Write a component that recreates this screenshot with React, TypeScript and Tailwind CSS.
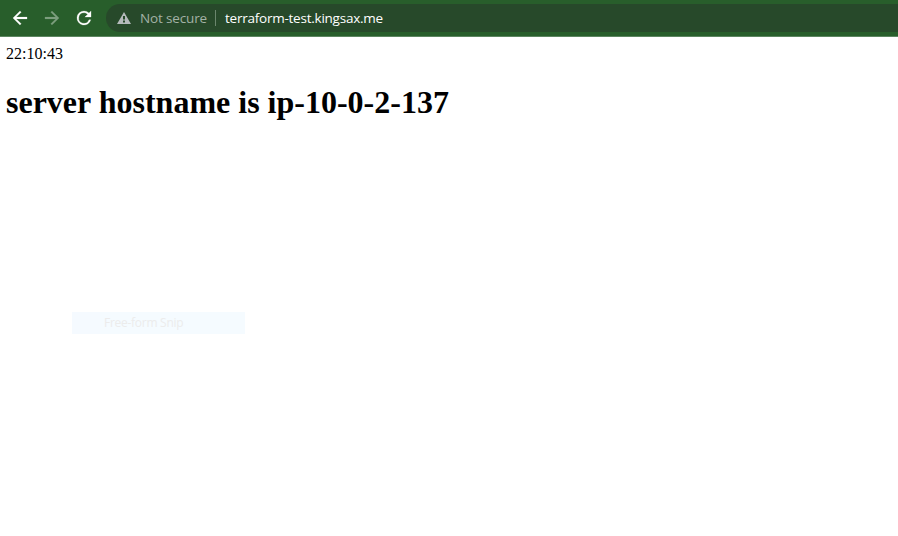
import React from "react";

function ToolbarIcon({ path, className }: { path: string; className: string }) {
  return (
    <svg
      viewBox="-0.5 -0.5 25 25"
      className={`size-[22px] shrink-0 ${className}`}
      fill="currentColor"
      stroke="currentColor"
      strokeWidth="0.25"
      aria-hidden="true"
    >
      <path d={path} />
    </svg>
  );
}

function Toolbar() {
  return (
    <header className="flex h-[37px] items-start border-b border-[#5c8560] bg-[#285e2b] pt-1 font-['Open_Sans',sans-serif] text-[13.5px]">
      <div className="flex h-7 items-center gap-2.5 pl-[9px]">
        <ToolbarIcon className="text-white" path="M20 11H7.83l5.59-5.59L12 4l-8 8 8 8 1.41-1.41L7.83 13H20v-2z" />
        <ToolbarIcon className="text-[#7c9e7e]" path="M12 4l-1.41 1.41L16.17 11H4v2h12.17l-5.58 5.59L12 20l8-8z" />
        <ToolbarIcon
          className="text-white"
          path="M17.65 6.35A7.958 7.958 0 0 0 12 4a8 8 0 1 0 7.73 10h-2.08A6 6 0 1 1 12 6c1.66 0 3.14.69 4.22 1.78L13 11h7V4l-2.35 2.35z"
        />
      </div>
      <div className="ml-[11px] flex h-7 flex-1 items-center rounded-l-full bg-[#27492a] pl-[11px]">
        <svg viewBox="0 0 14 12" className="h-3 w-3.5 shrink-0" fill="#b5babb" aria-hidden="true">
          <path fillRule="evenodd" d="M7 0l7 12H0L7 0zM6 4v3.5h2V4H6zm0 4.5v2h2v-2H6z" />
        </svg>
        <span className="ml-[9px] w-[75px] whitespace-nowrap tracking-[-0.15px] text-[#a3b1a5]">Not secure</span>
        <span className="h-4 w-px bg-[#6b866d]" />
        <span className="ml-[9px] whitespace-nowrap tracking-[-0.24px] text-white">terraform-test.kingsax.me</span>
      </div>
    </header>
  );
}

export default function App() {
  return (
    <div className="relative flex h-[536px] w-full flex-col overflow-hidden bg-white">
      <Toolbar />
      <main className="px-1.5 pt-2 font-['Liberation_Serif',serif] text-black">
        <p className="text-base leading-[18px]">22:10:43</p>
        <h1 className="mt-[21px] text-[32px] leading-9 font-bold">server hostname is ip-10-0-2-137</h1>
      </main>
      <div className="absolute top-[312px] left-[72px] flex h-[22px] w-[173px] items-center bg-[#f5fbff] font-['Open_Sans',sans-serif] text-[12px] text-[#ececec]">
        <span className="h-full w-7 bg-[#f5faff]" />
        <span className="ml-1 whitespace-nowrap tracking-[-0.27px]">Free-form Snip</span>
      </div>
    </div>
  );
}
